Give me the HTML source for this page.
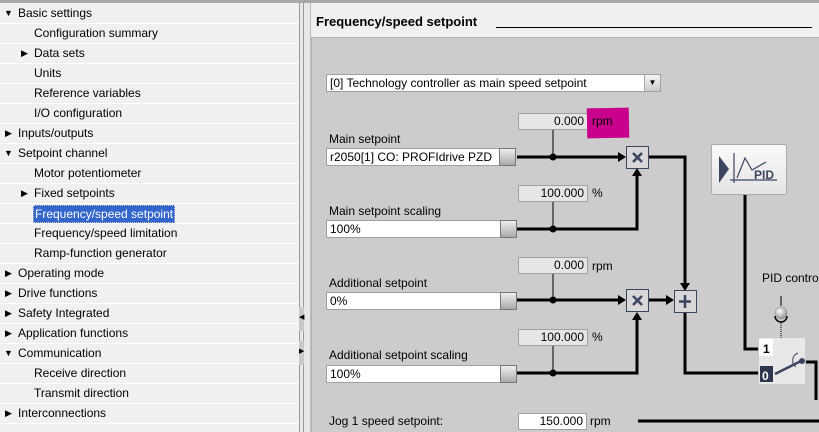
<!DOCTYPE html>
<html><head><meta charset="utf-8"><style>
*{margin:0;padding:0;box-sizing:border-box}
body{width:819px;height:432px;overflow:hidden;background:#f0f0f0;font-family:"Liberation Sans",sans-serif;font-size:12px;color:#000;position:relative}
.a{position:absolute;white-space:nowrap}
.row{position:absolute;left:0;width:299px;height:20px;border-bottom:1px solid #fff;line-height:19px}
.tri{position:absolute;top:0;font-size:9px !important}
.box{position:absolute;background:#e6e6e6;border:1px solid #a0a0a0;text-align:right;padding-right:3px;line-height:15px;font-size:12px}
.inp{position:absolute;background:#fff;border:1px solid #a0a0a0;line-height:16px;padding-left:3px;font-size:12px;overflow:hidden}
.btn{position:absolute;width:17px;border:1px solid #777;background:linear-gradient(#eee,#aaa)}
.lbl{position:absolute;font-size:12px;white-space:nowrap}
</style></head><body>
<div class="a" style="left:0;top:0;width:819px;height:3px;background:#a8a8a8"></div>
<!-- tree -->
<div style="position:absolute;left:0;top:4px;width:299px;height:428px;background:#f0f0f0">
<div class="row" style="top:0"><span class="tri" style="left:4px">&#9660;</span><span class="a" style="left:18px">Basic settings</span></div>
<div class="row" style="top:20px"><span class="a" style="left:34px">Configuration summary</span></div>
<div class="row" style="top:40px"><span class="tri" style="left:21px">&#9654;</span><span class="a" style="left:34px">Data sets</span></div>
<div class="row" style="top:60px"><span class="a" style="left:34px">Units</span></div>
<div class="row" style="top:80px"><span class="a" style="left:34px">Reference variables</span></div>
<div class="row" style="top:100px"><span class="a" style="left:34px">I/O configuration</span></div>
<div class="row" style="top:120px"><span class="tri" style="left:5px">&#9654;</span><span class="a" style="left:18px">Inputs/outputs</span></div>
<div class="row" style="top:140px"><span class="tri" style="left:4px">&#9660;</span><span class="a" style="left:18px">Setpoint channel</span></div>
<div class="row" style="top:160px"><span class="a" style="left:34px">Motor potentiometer</span></div>
<div class="row" style="top:180px"><span class="tri" style="left:21px">&#9654;</span><span class="a" style="left:34px">Fixed setpoints</span></div>
<div class="row" style="top:200px"><span class="a" style="left:33px;top:1px;height:18px;line-height:17px;background:#3366cc;color:#fff;padding:0 1px;border:1px dotted #ccc">Frequency/speed setpoint</span></div>
<div class="row" style="top:220px"><span class="a" style="left:34px">Frequency/speed limitation</span></div>
<div class="row" style="top:240px"><span class="a" style="left:34px">Ramp-function generator</span></div>
<div class="row" style="top:260px"><span class="tri" style="left:5px">&#9654;</span><span class="a" style="left:18px">Operating mode</span></div>
<div class="row" style="top:280px"><span class="tri" style="left:5px">&#9654;</span><span class="a" style="left:18px">Drive functions</span></div>
<div class="row" style="top:300px"><span class="tri" style="left:5px">&#9654;</span><span class="a" style="left:18px">Safety Integrated</span></div>
<div class="row" style="top:320px"><span class="tri" style="left:5px">&#9654;</span><span class="a" style="left:18px">Application functions</span></div>
<div class="row" style="top:340px"><span class="tri" style="left:4px">&#9660;</span><span class="a" style="left:18px">Communication</span></div>
<div class="row" style="top:360px"><span class="a" style="left:34px">Receive direction</span></div>
<div class="row" style="top:380px"><span class="a" style="left:34px">Transmit direction</span></div>
<div class="row" style="top:400px"><span class="tri" style="left:5px">&#9654;</span><span class="a" style="left:18px">Interconnections</span></div>
</div>
<!-- splitter -->
<div class="a" style="left:299px;top:3px;width:12px;height:429px;background:#e8e8e8;border-left:1px solid #999;border-right:1px solid #bbb"></div>
<div class="a" style="left:303px;top:3px;width:1px;height:429px;background:#999"></div>
<div class="a" style="left:299px;top:307px;width:5px;height:24px;background:#c8c8c8"></div>
<div class="a" style="left:299px;top:341px;width:5px;height:24px;background:#c8c8c8"></div>
<div class="a" style="left:299px;top:313px;font-size:7px">&#9664;</div>
<div class="a" style="left:299px;top:347px;font-size:7px">&#9654;</div>
<!-- title -->
<div class="a" style="left:316px;top:14px;font-weight:bold;font-size:13px">Frequency/speed setpoint</div>
<div class="a" style="left:496px;top:27px;width:316px;height:1px;background:#000"></div>
<!-- panel -->
<div class="a" style="left:311px;top:37px;width:508px;height:395px;background:#cccccc;border-top:1px solid #b5b5b5;border-left:1px solid #b5b5b5"></div>
<!-- dropdown -->
<div class="inp" style="left:326px;top:74px;width:335px;height:18px">[0] Technology controller as main speed setpoint</div>
<div class="a" style="left:644px;top:75px;width:16px;height:16px;background:linear-gradient(#f4f4f4,#ccc);border-left:1px solid #aaa;font-size:8px;text-align:center;line-height:16px">&#9660;</div>
<svg class="a" style="left:0;top:0" width="819" height="432">
<g stroke="#000" stroke-width="3" fill="none">
<path d="M517 157H620"/><path d="M648 157H685V286"/>
<path d="M517 229H637V174"/>
<path d="M517 300H620"/><path d="M648 300H668"/>
<path d="M517 373H637V317"/>
<path d="M685 312V373H758"/>
<path d="M745 195V349H758"/>
<path d="M806 362H816V400"/>
<path d="M638 421H819"/>
</g>
<g stroke="#000" stroke-width="1"><path d="M553 130V157M553 202V229M553 274V300M553 346V373M781 296V306"/></g>
<path d="M781 321V350" stroke="#000" stroke-dasharray="1,1"/>
<g fill="#000"><circle cx="553" cy="157" r="3.5"/><circle cx="553" cy="229" r="3.5"/><circle cx="553" cy="300" r="3.5"/><circle cx="553" cy="373" r="3.5"/>
<path d="M618 152L626 157L618 162Z"/><path d="M618 295L626 300L618 305Z"/><path d="M666 295L674 300L666 305Z"/>
<path d="M632 176L637 168L642 176Z"/><path d="M632 320L637 312L642 320Z"/><path d="M680 283L685 291L690 283Z"/></g>
<g fill="#d8d8d8" stroke="#3c4560" stroke-width="1"><rect x="626.5" y="146.5" width="22" height="22"/><rect x="626.5" y="289.5" width="22" height="22"/><rect x="674.5" y="290.5" width="22" height="22"/></g>
<g stroke="#3c4560" stroke-width="2.5"><path d="M633 153L642 162M642 153L633 162M633 296L642 305M642 296L633 305M685 295V308M679 301.5H691"/></g>
<rect x="711.5" y="144.5" width="75" height="50" rx="2" fill="url(#gb)" stroke="#aaa"/>
<defs><linearGradient id="gb" x1="0" y1="0" x2="0" y2="1"><stop offset="0" stop-color="#fafafa"/><stop offset="1" stop-color="#e4e4e4"/></linearGradient>
<radialGradient id="lp" cx=".4" cy=".35" r=".6"><stop offset="0" stop-color="#fff"/><stop offset="1" stop-color="#999"/></radialGradient></defs>
<path d="M719 156L729 169L719 183Z" fill="#3c4560"/>
<g stroke="#3c4560" stroke-width="1.2" fill="none"><path d="M734 153V183M730 180H777M737 178L745 158L752 170L766 162"/></g>
<text x="754" y="179" font-family="Liberation Sans" font-weight="bold" font-size="12" fill="#3c4560">PID</text>
<rect x="759" y="338" width="46" height="46" fill="#e8e8e8"/>
<rect x="759" y="339" width="14" height="17" fill="#fff"/>
<text x="763" y="353" font-family="Liberation Sans" font-weight="bold" font-size="12">1</text>
<rect x="760" y="366" width="13" height="16" fill="#2f3650"/>
<text x="762" y="380" font-family="Liberation Sans" font-weight="bold" font-size="12" fill="#fff">0</text>
<path d="M775 374L801 361" stroke="#3c4560" stroke-width="2.5"/>
<circle cx="802" cy="361" r="3" fill="#3c4560"/>
<path d="M798 353A8 8 0 0 0 796 367" stroke="#3c4560" fill="none"/>
<circle cx="781" cy="313" r="6" fill="url(#lp)" stroke="#888" stroke-width=".5"/>
<path d="M775 316A6 6 0 0 0 787 316" stroke="#000" stroke-width="1.5" fill="none"/>
</svg>
<div class="box" style="left:518px;top:113px;width:70px;height:17px">0.000</div>
<div class="a" style="left:587px;top:108px;width:42px;height:30px;background:#c8008c;transform:rotate(-1deg)"></div>
<div class="lbl" style="left:592px;top:114px">rpm</div>
<div class="lbl" style="left:329px;top:132px">Main setpoint</div>
<div class="inp" style="left:326px;top:148px;width:174px;height:18px">r2050[1] CO: PROFIdrive PZD re</div>
<div class="btn" style="left:499px;top:148px;height:18px"></div>
<div class="box" style="left:518px;top:185px;width:70px;height:17px">100.000</div>
<div class="lbl" style="left:592px;top:186px">%</div>
<div class="lbl" style="left:329px;top:204px">Main setpoint scaling</div>
<div class="inp" style="left:326px;top:220px;width:175px;height:18px">100%</div>
<div class="btn" style="left:500px;top:220px;height:18px"></div>
<div class="box" style="left:518px;top:257px;width:70px;height:17px">0.000</div>
<div class="lbl" style="left:592px;top:259px">rpm</div>
<div class="lbl" style="left:329px;top:276px">Additional setpoint</div>
<div class="inp" style="left:326px;top:292px;width:175px;height:18px">0%</div>
<div class="btn" style="left:500px;top:292px;height:18px"></div>
<div class="box" style="left:518px;top:329px;width:70px;height:17px">100.000</div>
<div class="lbl" style="left:592px;top:330px">%</div>
<div class="lbl" style="left:329px;top:348px">Additional setpoint scaling</div>
<div class="inp" style="left:326px;top:365px;width:175px;height:18px">100%</div>
<div class="btn" style="left:500px;top:365px;height:18px"></div>
<div class="lbl" style="left:762px;top:271px">PID control</div>
<div class="lbl" style="left:329px;top:414px">Jog 1 speed setpoint:</div>
<div class="box" style="left:518px;top:413px;width:69px;height:17px;background:#fff">150.000</div>
<div class="lbl" style="left:590px;top:414px">rpm</div>
</body></html>
